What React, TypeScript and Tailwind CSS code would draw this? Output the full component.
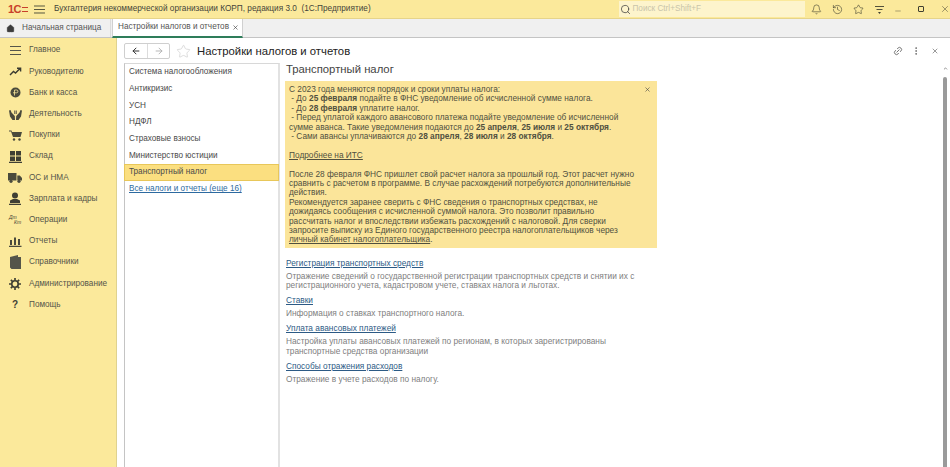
import React from "react";
import { Link2, MoreVertical, X, Star, Bell, History, Search, Minus, ArrowLeft, ArrowRight, Home, ChevronUp } from "lucide-react";

const IconMenu = () => (
  <svg width="13" height="11" viewBox="0 0 13 11" className="text-[#55554a]">
    <path d="M1 1.5h11M1 5.5h11M1 9.5h11" stroke="currentColor" strokeWidth="1" />
  </svg>
);
const IconTrend = () => (
  <svg width="13" height="9" viewBox="0 0 13 9" fill="none" stroke="#3b3b30" strokeWidth="1.4">
    <path d="M1 8l3.5-3.5 2 1.5L11 1.5M8 1.2h3.6v3.4" />
  </svg>
);
const IconBank = () => (
  <svg width="11" height="11" viewBox="0 0 11 11">
    <circle cx="5.5" cy="5.5" r="5" fill="#4a4a3c" />
    <path d="M4.5 8.5V3H6.500a1.300 1.300 0 0 1 0 2.800H3" stroke="#fbe99b" strokeWidth="0.8" fill="none" />
  </svg>
);
const IconHands = () => (
  <svg width="13" height="11" viewBox="0 0 13 11" fill="#4a4a3c">
    <path d="M0 1.500l1.500-.5 1 2.500L5.800 7 6 11H3.500L1 7.500z" />
    <path d="M13 1.500l-1.500-.5-1 2.500L7.200 7 7 11h2.500L12 7.500z" />
    <path d="M5.300 1.500h.9v3.500h-.9zM6.800 1.500h.9v3.500h-.9z" />
  </svg>
);
const IconCart = () => (
  <svg width="13" height="11" viewBox="0 0 13 11" fill="#4a4a3c">
    <path d="M0 .5h2.500L3 2h10l-1.500 5H4L2 1.500H0z" />
    <circle cx="5" cy="9.500" r="1.200" />
    <circle cx="10.500" cy="9.500" r="1.200" />
  </svg>
);
const IconGrid = () => (
  <svg width="13" height="12" viewBox="0 0 13 12" fill="#3f3f34">
    <path d="M1 0h5v4.500H1zM7 0h5v4.500H7zM1 5.500h5V10H1zM7 5.500h5V10H7zM0 10.800h13V12H0z" />
  </svg>
);
const IconTruck = () => (
  <svg width="14" height="10" viewBox="0 0 14 10" fill="#4a4a3c">
    <path d="M0 0h8.500v7.500H0zM9.300 2.500h2.500L14 5v2.500H9.300z" />
    <circle cx="3" cy="8.300" r="1.600" />
    <circle cx="11" cy="8.300" r="1.600" />
  </svg>
);
const IconUser = () => (
  <svg width="12" height="13" viewBox="0 0 12 13" fill="#3f3f34">
    <circle cx="6" cy="3.500" r="3" />
    <path d="M1 8.500l3-1.500h4l3 1.500V11H1zM0 11.800h12V13H0z" />
  </svg>
);
const IconChart = () => (
  <svg width="13" height="11" viewBox="0 0 13 11" fill="#4a4a3c">
    <path d="M1 4h2v5H1zM5 1.500h2V9H5zM9 3h2v6H9zM0 9.800h12.500V11H0z" />
  </svg>
);
const IconBook = () => (
  <svg width="11" height="14" viewBox="0 0 11 14" fill="#55554a">
    <path d="M0 2l8-2v2h3v12H1.500L0 12.500z" />
  </svg>
);
const IconGear = () => (
  <svg width="12" height="12" viewBox="0 0 13 13">
    <circle cx="6.500" cy="6.500" r="3.500" fill="none" stroke="#3f3f34" strokeWidth="1.800" />
    <path d="M6.500 0v2.500M6.500 10.500V13M0 6.500h2.500M10.500 6.500H13M2 2l1.800 1.800M9.200 9.200L11 11M11 2L9.200 3.800M3.800 9.200L2 11" stroke="#3f3f34" strokeWidth="1.800" />
  </svg>
);

const nav: [React.ReactNode, string][] = [
  [<IconMenu />, "Главное"],
  [<IconTrend />, "Руководителю"],
  [<IconBank />, "Банк и касса"],
  [<IconHands />, "Деятельность"],
  [<IconCart />, "Покупки"],
  [<IconGrid />, "Склад"],
  [<IconTruck />, "ОС и НМА"],
  [<IconUser />, "Зарплата и кадры"],
  [
    <span className="block text-[5px] leading-[5px] italic text-[#3f3f34]">
      Дт
      <br />
      <span className="ml-[5px]">Кт</span>
    </span>,
    "Операции",
  ],
  [<IconChart />, "Отчеты"],
  [<IconBook />, "Справочники"],
  [<IconGear />, "Администрирование"],
  [<span className="text-[10px] font-bold leading-none text-[#3f3f34]">?</span>, "Помощь"],
];

const sections = ["Система налогообложения", "Антикризис", "УСН", "НДФЛ", "Страховые взносы", "Министерство юстиции"];

const links = [
  {
    title: "Регистрация транспортных средств",
    text: "Отражение сведений о государственной регистрации транспортных средств и снятии их с регистрационного учета, кадастровом учете, ставках налога и льготах.",
  },
  { title: "Ставки", text: "Информация о ставках транспортного налога." },
  {
    title: "Уплата авансовых платежей",
    text: "Настройка уплаты авансовых платежей по регионам, в которых зарегистрированы транспортные средства организации",
  },
  { title: "Способы отражения расходов", text: "Отражение в учете расходов по налогу." },
];

export default function App() {
  return (
    <div className="flex h-[467px] w-[950px] flex-col overflow-hidden bg-white font-['Liberation_Sans',Arial,sans-serif] text-[8.2px] text-[#4a4a4a]">
      {/* header */}
      <header className="flex h-[19px] shrink-0 items-center border-b border-[#e6d48a] bg-[#fbe99b]">
        <div className="ml-[8px] flex w-[22px] items-center text-[11px] font-bold leading-none tracking-[-0.5px] text-[#c8402a]">
          1С
          <span className="ml-[1px] block h-[5px] w-[6px] border-y border-[#c8402a]" />
        </div>
        <svg width="11" height="9" viewBox="0 0 11 9" className="ml-[4px]">
          <path d="M0 1h11M0 4.500h11M0 8h11" stroke="#55553f" strokeWidth="1" />
        </svg>
        <span className="ml-[9px] w-[567px] whitespace-nowrap text-[8.25px] text-[#45453a]">Бухгалтерия некоммерческой организации КОРП, редакция 3.0&nbsp; (1С:Предприятие)</span>
        <div className="flex h-[16px] w-[186px] items-center bg-[#fdf4cc] pl-[1px] text-[#c9c4aa]">
          <Search size={11} strokeWidth={1.6} className="text-[#3c3c3c]" />
          <span className="ml-[1px]">Поиск Ctrl+Shift+F</span>
        </div>
        <div className="ml-[6px] flex items-center text-[#3f3f30]">
          <Bell size={11} strokeWidth={1.3} />
          <History size={11} strokeWidth={1.3} className="ml-[10px]" />
          <Star size={11} strokeWidth={1.3} className="ml-[10px]" />
          <svg width="11" height="11" viewBox="0 0 11 11" className="ml-[10px]">
            <path d="M1 2.500h9M2.500 5.500h6" stroke="#3f3f30" strokeWidth="0.9" />
            <path d="M4 8h3L5.500 10z" fill="#3f3f30" />
          </svg>
          <Minus size={8} strokeWidth={1.3} className="ml-[9px] mt-[4px]" />
          <span className="ml-[16px] block h-[6px] w-[6px] rounded-[1px] border border-[#3f3f30]" />
          <X size={10} strokeWidth={1.2} className="ml-[16px]" />
        </div>
      </header>

      {/* tabs */}
      <div className="flex h-[19px] shrink-0 border-b border-[#c4c4c4] bg-[#f0f0f0]">
        <div className="flex w-[111px] items-center border-r border-[#dcdcdc] pl-[6px] text-[#555]">
          <Home size={9} fill="#3c3c3c" strokeWidth={1} />
          <span className="ml-[7px] whitespace-nowrap">Начальная страница</span>
        </div>
        <div className="ml-[1px] flex h-[19px] w-[131px] items-center border-x border-b-2 border-x-[#d0d0d0] border-b-[#2e7d5a] bg-white pl-[5px] text-[#555]">
          <span className="whitespace-nowrap">Настройки налогов и отчетов</span>
          <X size={7} strokeWidth={2} className="ml-[3px] text-[#333]" />
        </div>
      </div>

      <div className="flex min-h-0 flex-1">
        {/* sidebar */}
        <aside className="w-[117px] shrink-0 border-r border-[#dfd28f] bg-[#fbe99b] pt-[2px]">
          {nav.map(([icon, label]) => (
            <div key={label} className="flex h-[21.2px] items-center">
              <div className="flex w-[29px] justify-center pl-[1px]">{icon}</div>
              <span className="whitespace-nowrap text-[#55554a]">{label}</span>
            </div>
          ))}
        </aside>

        {/* main */}
        <main className="min-w-0 flex-1 pl-[7px]">
          <div className="flex h-[25px] items-center pt-[1px]">
            <div className="flex h-[16px] w-[46px] rounded-[2px] border border-[#cfcfcf]">
              <div className="flex w-[23px] items-center justify-center border-r border-[#dcdcdc]">
                <ArrowLeft size={10} strokeWidth={2.4} className="text-[#333]" />
              </div>
              <div className="flex flex-1 items-center justify-center">
                <ArrowRight size={10} strokeWidth={2} className="text-[#aaa]" />
              </div>
            </div>
            <Star size={15} strokeWidth={1} className="ml-[6px] text-[#c8c8c8]" />
            <h1 className="ml-[6px] whitespace-nowrap text-[11.3px] text-[#222]">Настройки налогов и отчетов</h1>
            <div className="ml-auto flex items-center text-[#666]">
              <Link2 size={10} className="-rotate-45" />
              <MoreVertical size={10} className="ml-[8px]" />
              <X size={8} className="ml-[10px] mr-[11px]" />
            </div>
          </div>

          <div className="flex h-[404px]">
            <div className="h-full w-[156px] shrink-0 border-l border-r-2 border-t border-l-[#c4c4c4] border-r-[#e2e2e2] border-t-[#d8d8d8]">
              {sections.map((s) => (
                <div key={s} className="flex h-[16.7px] items-center pl-[4px] text-[#4a4a4a]">
                  {s}
                </div>
              ))}
              <div className="mx-[-1px] flex h-[17px] items-center border border-[#e8c75a] bg-[#fbdf80] pl-[4px] text-[#4a4a4a]">Транспортный налог</div>
              <div className="flex h-[17px] items-center pl-[4px] text-[#2d6aa0] underline">Все налоги и отчеты (еще 16)</div>
            </div>

            <div className="ml-[5px] w-[372px] shrink-0 text-[8.3px]">
              <h2 className="h-[18px] pl-[1px] text-[11.3px] leading-[13px] text-[#444]">Транспортный налог</h2>
              <div className="relative h-[167px] whitespace-nowrap bg-[#fbe59a] pl-[4px] pt-[4px] leading-[9.4px] text-[#50503f]">
                <X size={7} strokeWidth={2} className="absolute right-[6px] top-[5px] text-[#444]" />
                <p>С 2023 года меняются порядок и сроки уплаты налога:</p>
                <p>&nbsp;- До <b>25 февраля</b> подайте в ФНС уведомление об исчисленной сумме налога.</p>
                <p>&nbsp;- До <b>28 февраля</b> уплатите налог.</p>
                <p>&nbsp;- Перед уплатой каждого авансового платежа подайте уведомление об исчисленной</p>
                <p>сумме аванса. Такие уведомления подаются до <b>25 апреля</b>, <b>25 июля</b> и <b>25 октября</b>.</p>
                <p>&nbsp;- Сами авансы уплачиваются до <b>28 апреля</b>, <b>28 июля</b> и <b>28 октября</b>.</p>
                <p className="mt-[9.4px] underline">Подробнее на ИТС</p>
                <p className="mt-[9.4px]">После 28 февраля ФНС пришлет свой расчет налога за прошлый год. Этот расчет нужно</p>
                <p>сравнить с расчетом в программе. В случае расхождений потребуются дополнительные</p>
                <p>действия.</p>
                <p>Рекомендуется заранее сверить с ФНС сведения о транспортных средствах, не</p>
                <p>дожидаясь сообщения с исчисленной суммой налога. Это позволит правильно</p>
                <p>рассчитать налог и впоследствии избежать расхождений с налоговой. Для сверки</p>
                <p>запросите выписку из Единого государственного реестра налогоплательщиков через</p>
                <p><span className="underline">личный кабинет налогоплательщика</span>.</p>
              </div>
              <div className="mt-[11px] pl-[1px]">
                {links.map((l) => (
                  <div key={l.title} className="mb-[5.6px]">
                    <div className="mb-[3.6px] leading-[9.4px] text-[#2c5a85] underline">{l.title}</div>
                    <p className="leading-[9.4px] text-[#808080]">{l.text}</p>
                  </div>
                ))}
              </div>
            </div>

            <div className="ml-auto mr-[3px] flex w-[4px] flex-col items-center pt-[3px]">
              <ChevronUp size={5} strokeWidth={3} className="shrink-0 text-[#555]" />
              <div className="mt-[6px] w-[4px] flex-1 rounded-t-full bg-[#9a9a9a]" />
            </div>
          </div>
        </main>
      </div>
    </div>
  );
}
